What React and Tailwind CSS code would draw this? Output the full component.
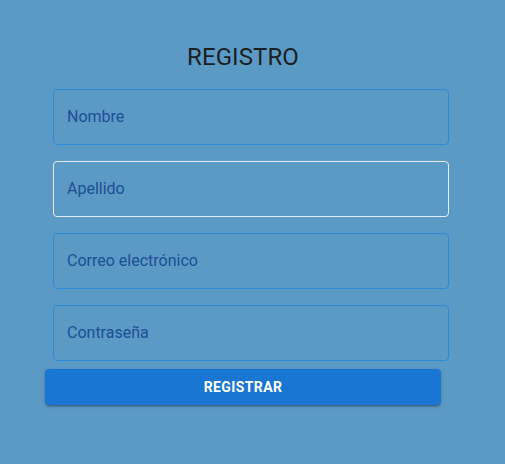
import React from "react";

const fields = [
  { label: "Nombre", active: false },
  { label: "Apellido", active: true },
  { label: "Correo electrónico", active: false },
  { label: "Contraseña", active: false },
];

const App = () => {
  return (
    <div className="min-h-[464px] w-full bg-[#5c9ac6] font-['Roboto',sans-serif]">
      <div className="w-[396px] ml-[53px] pt-[40px]">
        <h1 className="-ml-4 text-center text-[24px] leading-[34px] text-[#1a1f24] tracking-[0.1px] mb-[15px]">
          REGISTRO
        </h1>

        <div className="flex flex-col gap-4">
          {fields.map((f) => (
            <div
              key={f.label}
              className={`h-14 rounded flex items-center px-[13px] border ${
                f.active ? "border-[#e6edf5]" : "border-[#2f8ad6]"
              }`}
            >
              <span className="text-[16px] text-[#1b4f94]">{f.label}</span>
            </div>
          ))}
        </div>

        <button className="-ml-2 mt-2 w-[396px] h-9 rounded bg-[#1976d2] text-white text-[14px] font-bold tracking-[0.4px] uppercase shadow-[0_3px_1px_-2px_rgba(0,0,0,0.2),0_2px_2px_0_rgba(0,0,0,0.14),0_1px_5px_0_rgba(0,0,0,0.12)]">
          Registrar
        </button>
      </div>
    </div>
  );
};

export default App;
